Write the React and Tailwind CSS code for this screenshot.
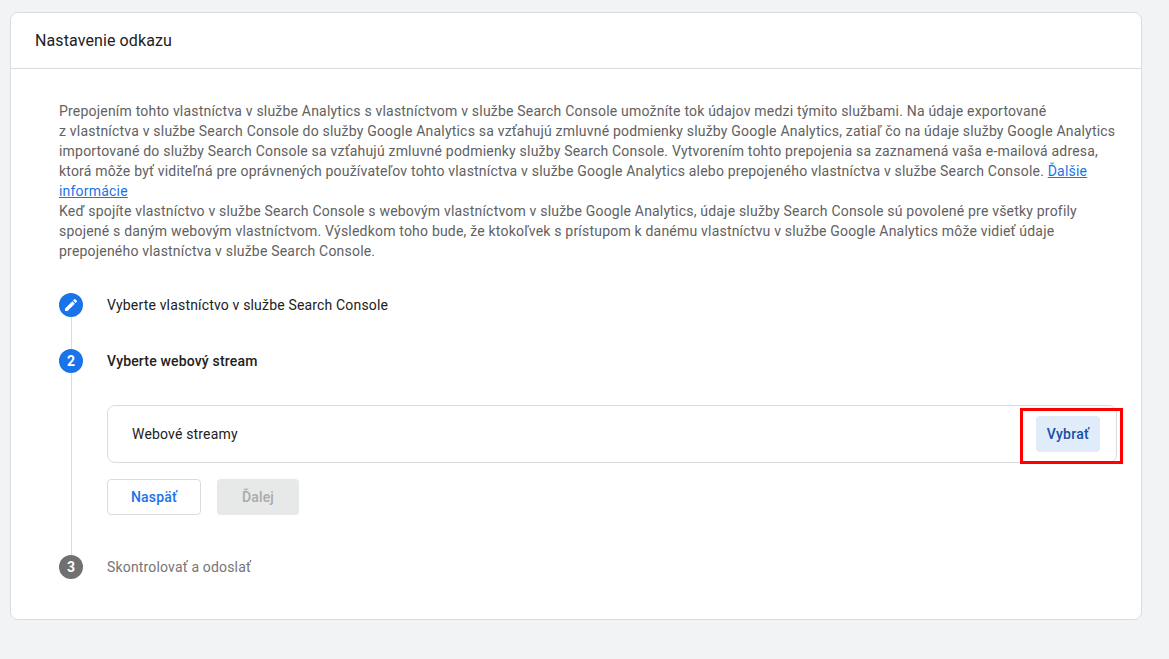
const roboto = "font-['Roboto',sans-serif]"

function StepCircle({ bg, children }) {
  return (
    <div className={`w-6 h-6 rounded-full ${bg} text-white flex items-center justify-center text-sm font-bold shrink-0`}>
      {children}
    </div>
  )
}

function Rail({ circle, last, className, children }) {
  return (
    <div className={`flex gap-6 ${className || ""}`}>
      <div className="w-6 flex flex-col items-center shrink-0">
        {circle}
        {!last && <div className="w-px flex-1 bg-[#dadce0]" />}
      </div>
      <div className="flex-1 min-w-0">{children}</div>
    </div>
  )
}

export default function App() {
  return (
    <div className={`min-h-[659px] bg-[#f1f3f4] pt-3 pl-2.5 ${roboto}`}>
      <div className="w-[1132px] h-[608px] bg-white border border-[#dadce0] rounded-lg">
        <div className="h-[56px] border-b border-[#dadce0] pl-6 flex items-center text-base tracking-[0.1px] text-[#212121]">
          Nastavenie odkazu
        </div>

        <div className="pl-12 pr-6 pt-8">
          <p className="text-sm leading-5 tracking-[0.2px] text-[#616161]">
            Prepojením tohto vlastníctva v službe Analytics s vlastníctvom v službe Search Console umožníte tok údajov medzi týmito službami. Na údaje exportované z&nbsp;vlastníctva v službe Search Console do služby Google Analytics sa vzťahujú zmluvné podmienky služby Google Analytics, zatiaľ čo na údaje služby Google Analytics importované do služby Search Console sa vzťahujú zmluvné podmienky služby Search Console. Vytvorením tohto prepojenia sa zaznamená vaša e-mailová adresa, ktorá môže byť viditeľná pre oprávnených používateľov tohto vlastníctva v službe Google Analytics alebo prepojeného vlastníctva v službe Search Console.{" "}
            <a className="text-[#1a73e8] underline" href="#">Ďalšie informácie</a>
            <br />
            Keď spojíte vlastníctvo v službe Search Console s webovým vlastníctvom v službe Google Analytics, údaje služby Search Console sú povolené pre všetky profily spojené s daným webovým vlastníctvom. Výsledkom toho bude, že ktokoľvek s prístupom k danému vlastníctvu v službe Google Analytics môže vidieť údaje prepojeného vlastníctva v službe Search Console.
          </p>

          <div className="mt-[32px]">
            <Rail
              className="h-[56px]"
              circle={
                <StepCircle bg="bg-[#1a73e8]">
                  <svg width="16" height="16" viewBox="0 0 24 24" fill="currentColor">
                    <path d="M3 17.25V21h3.75L17.81 9.94l-3.75-3.75L3 17.25zM20.71 7.04a1 1 0 0 0 0-1.41l-2.34-2.34a1 1 0 0 0-1.41 0l-1.83 1.83 3.75 3.75 1.83-1.83z" />
                  </svg>
                </StepCircle>
              }
            >
              <div className="h-6 flex items-center text-sm tracking-[0.17px] text-[#212121]">
                Vyberte vlastníctvo v službe Search Console
              </div>
            </Rail>

            <Rail className="h-[206px]" circle={<StepCircle bg="bg-[#1a73e8]">2</StepCircle>}>
              <div className="h-6 flex items-center text-sm font-medium tracking-[0.17px] text-[#212121]">
                Vyberte webový stream
              </div>
              <div className="relative mt-8 h-[58px] border border-[#dadce0] rounded-lg flex items-center justify-between pl-6 pr-4">
                <span className="text-sm tracking-[0.17px] text-[#212121]">Webové streamy</span>
                <button className="h-9 w-16 rounded bg-[#e1ecfa] text-sm font-medium tracking-[0.3px] text-[#174ea6]">
                  Vybrať
                </button>
                <div className="absolute left-[912px] top-[2px] w-[103px] h-[56px] border-[3px] border-[#ff0000] pointer-events-none" />
              </div>
              <div className="mt-4 flex gap-4">
                <button className="h-9 w-[94px] rounded border border-[#dadce0] bg-white text-sm font-medium tracking-[0.17px] text-[#1a73e8]">
                  Naspäť
                </button>
                <button className="h-9 w-[82px] rounded bg-[#e7e8e8] text-sm font-medium tracking-[0.17px] text-[#a9abab]">
                  Ďalej
                </button>
              </div>
            </Rail>

            <Rail last circle={<StepCircle bg="bg-[#707070]">3</StepCircle>}>
              <div className="h-6 flex items-center text-sm tracking-[0.17px] text-[#757575]">
                Skontrolovať a odoslať
              </div>
            </Rail>
          </div>
        </div>
      </div>
    </div>
  )
}
